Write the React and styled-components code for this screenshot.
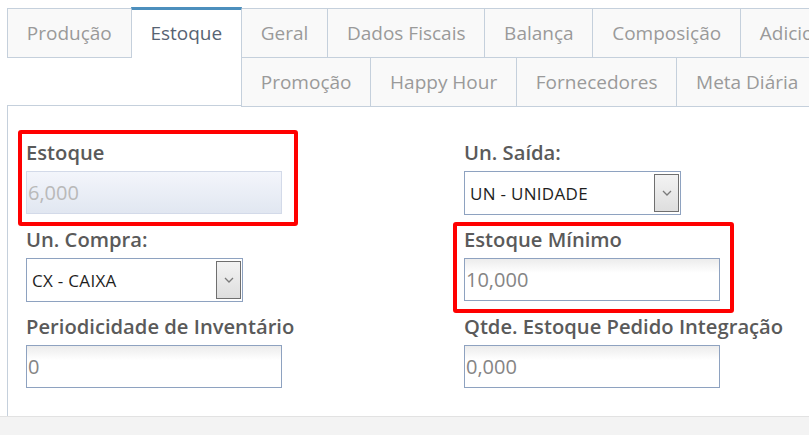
import styled, { createGlobalStyle } from "styled-components";

const GlobalStyle = createGlobalStyle`
    html, body {
        margin: 0;
        padding: 0;
        background: #fff;
        overflow: hidden;
    }
    body {
        font-family: "Open Sans", "Liberation Sans", sans-serif;
    }
`;

const topTabs = ['Geral', 'Dados Fiscais', 'Balança', 'Composição', 'Adicionais'];
const bottomTabs = ['Promoção', 'Happy Hour', 'Fornecedores', 'Meta Diária'];

const ChevronIcon = () => (
    <svg width="10" height="6" viewBox="0 0 10 6">
        <path d="M1 1 L5 5 L9 1" fill="none" stroke="#7a7a7a" strokeWidth="1.3" />
    </svg>
);

const SelectField = ({ value }) => (
    <SelectBox>
        <span className="value">{value}</span>
        <DropButton><ChevronIcon /></DropButton>
    </SelectBox>
);

const App = () => {
    return (
        <Page>
            <GlobalStyle />
            <TabBar>
                <Tab>Produção</Tab>
                <Tab $active>Estoque</Tab>
                <TabRows>
                    <TabRow>
                        {topTabs.map((t) => <Tab key={t}>{t}</Tab>)}
                    </TabRow>
                    <TabRow>
                        {bottomTabs.map((t) => <Tab key={t}>{t}</Tab>)}
                    </TabRow>
                </TabRows>
            </TabBar>

            <Panel>
                <FormGrid>
                    <Field $inset="-9px -16px -11px -8px" $highlight>
                        <Label>Estoque</Label>
                        <TextInput $disabled>6,000</TextInput>
                    </Field>
                    <Field>
                        <Label>Un. Saída:</Label>
                        <SelectField value="UN - UNIDADE" />
                    </Field>
                    <Field>
                        <Label>Un. Compra:</Label>
                        <SelectField value="CX - CAIXA" />
                    </Field>
                    <Field $inset="-4px -14px -11px -11px" $highlight>
                        <Label>Estoque Mínimo</Label>
                        <TextInput>10,000</TextInput>
                    </Field>
                    <Field>
                        <Label>Periodicidade de Inventário</Label>
                        <TextInput>0</TextInput>
                    </Field>
                    <Field>
                        <Label>Qtde. Estoque Pedido Integração</Label>
                        <TextInput>0,000</TextInput>
                    </Field>
                </FormGrid>
            </Panel>
            <BottomBar />
        </Page>
    );
};

export default App;

const Page = styled.div`
    width: 1200px;
    padding: 7px 0 0 7px;
    height: 435px;
    box-sizing: border-box;
    display: flex;
    flex-direction: column;
`;

const TabBar = styled.div`
    display: flex;
    align-items: flex-start;
`;

const TabRows = styled.div`
    display: flex;
    flex-direction: column;
`;

const TabRow = styled.div`
    display: flex;
    & + & {
        margin-top: -1px;
    }
`;

const Tab = styled.div`
    box-sizing: border-box;
    height: ${p => p.$active ? '51px' : '50px'};
    margin-top: ${p => p.$active ? '0' : '1px'};
    margin-right: -1px;
    padding: 0 18.8px;
    display: flex;
    align-items: center;
    white-space: nowrap;
    font-size: 19px;
    color: ${p => p.$active ? '#576373' : '#9a9a9a'};
    background: ${p => p.$active ? '#fff' : '#f9f9f9'};
    border: 1px solid #c5d0dc;
    border-top: ${p => p.$active ? '3px solid #4c8fbd' : '1px solid #c5d0dc'};
    border-bottom: ${p => p.$active ? 'none' : '1px solid #c5d0dc'};
    padding-bottom: ${p => p.$active ? '2px' : '0'};
    position: relative;
    z-index: ${p => p.$active ? 1 : 0};

    ${TabRow} & {
        margin-top: 0;
    }
    ${TabRow}:first-child & {
        margin-top: 1px;
    }
`;

const Panel = styled.div`
    margin-top: -2px;
    border: 1px solid #c5d0dc;
    border-bottom: none;
    padding: 33px 18px 28px 18px;
`;

const FormGrid = styled.div`
    display: grid;
    grid-template-columns: 438px 438px;
    row-gap: 11px;
`;

const Field = styled.div`
    position: relative;
    width: 256px;
    display: flex;
    flex-direction: column;

    &::after {
        content: '';
        display: ${p => p.$highlight ? 'block' : 'none'};
        position: absolute;
        inset: ${p => p.$inset || '0'};
        border: 4px solid #ff0000;
        border-radius: 3px;
        pointer-events: none;
    }
`;

const Label = styled.div`
    font-size: 20.2px;
    line-height: 27px;
    font-weight: 600;
    color: #5a5a5a;
    margin-bottom: 5px;
    white-space: nowrap;
`;

const TextInput = styled.div`
    box-sizing: border-box;
    width: 256px;
    height: 43px;
    display: flex;
    align-items: center;
    padding: 0 1px;
    font-size: 20px;
    color: ${p => p.$disabled ? '#b9b9b9' : '#858585'};
    border: 1px solid ${p => p.$disabled ? '#d3dae9' : '#8ea2c0'};
    background: ${p => p.$disabled
        ? 'linear-gradient(to bottom, #f3f5fb 0%, #e1e7f1 100%)'
        : 'linear-gradient(to bottom, #ececec 0px, #ffffff 14px)'};
`;

const SelectBox = styled.div`
    box-sizing: border-box;
    width: 217px;
    height: 44px;
    display: flex;
    align-items: center;
    justify-content: space-between;
    padding: 2px 1px 2px 5px;
    border: 1px solid #8ea2c0;
    background: #fff;

    .value {
        font-size: 17px;
        color: #1e1e1e;
        letter-spacing: 0.3px;
    }
`;

const DropButton = styled.div`
    box-sizing: border-box;
    width: 25px;
    height: 100%;
    display: flex;
    align-items: center;
    justify-content: center;
    border: 1px solid #6f6f6f;
    background: linear-gradient(to bottom, #f3f3f3 0%, #dedede 100%);
`;

const BottomBar = styled.div`
    flex: 1;
    margin-left: -7px;
    border-top: 1px solid #e2e2e2;
    background: #f3f3f3;
`;
